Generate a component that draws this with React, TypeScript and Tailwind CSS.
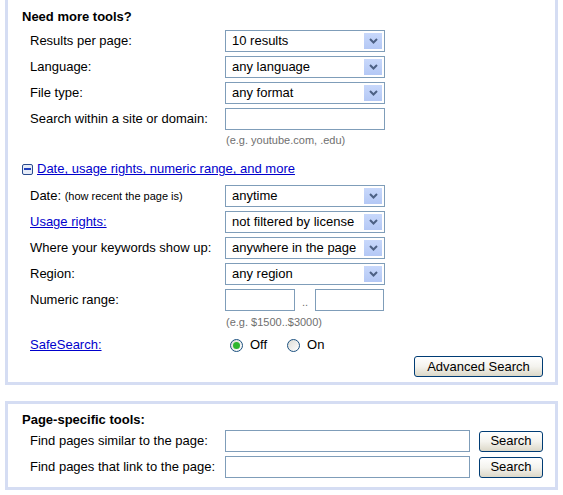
import React from "react";

const font = { fontFamily: '"Liberation Sans", Arial, sans-serif' };

function Chevron() {
  return (
    <svg width="9" height="6" viewBox="0 0 9 6">
      <path d="M1 1 L4.5 4.5 L8 1" fill="none" stroke="#4d6185" strokeWidth="2" />
    </svg>
  );
}

function Sel({ text }: { text: string }) {
  return (
    <div className="relative w-[160px] h-[22px] border border-[#7f9db9] bg-white flex items-center pl-[6px] text-[13px] text-black">
      <span className="whitespace-nowrap">{text}</span>
      <div className="absolute right-[2px] top-[2px] w-[18px] h-[16px] bg-gradient-to-b from-[#c8d8fb] to-[#b4c8f5] flex items-center justify-center">
        <Chevron />
      </div>
    </div>
  );
}

function Input({ w }: { w: string }) {
  return <div className={`h-[22px] border border-[#7f9db9] bg-white ${w}`} />;
}

function Btn({ text, w }: { text: string; w: string }) {
  return (
    <div
      className={`${w} h-[21px] border border-[#003c74] rounded-[3px] bg-gradient-to-b from-[#ffffff] via-[#f4f3ee] to-[#dcd8c8] flex items-center justify-center text-[13px] text-black`}
    >
      {text}
    </div>
  );
}

function Row({ label, children }: { label: React.ReactNode; children: React.ReactNode }) {
  return (
    <div className="grid grid-cols-[195px_1fr] h-[26px] items-center">
      <div className="text-[13px] text-black whitespace-nowrap">{label}</div>
      <div className="flex items-center">{children}</div>
    </div>
  );
}

function Radio({ checked }: { checked?: boolean }) {
  return (
    <div className="w-[13px] h-[13px] rounded-full border border-[#1c5180] bg-gradient-to-br from-[#dcdcd6] to-[#ffffff] flex items-center justify-center">
      {checked && <div className="w-[7px] h-[7px] rounded-full bg-[#2fb62f]" />}
    </div>
  );
}

export default function App() {
  return (
    <div className="w-[563px] h-[495px] bg-white overflow-hidden" style={font}>
      <div className="ml-[5px] w-[553px] border-x-[3px] border-b-[3px] border-[#d5ddf3] pb-[5px]">
        <div className="pt-[9px] pl-[14px] h-[25px] leading-[16px] text-[13px] font-bold text-black">Need more tools?</div>
        <div className="pl-[22px] mt-[3px]">
          <Row label="Results per page:">
            <Sel text="10 results" />
          </Row>
          <Row label="Language:">
            <Sel text="any language" />
          </Row>
          <Row label="File type:">
            <Sel text="any format" />
          </Row>
          <Row label="Search within a site or domain:">
            <Input w="w-[160px]" />
          </Row>
          <div className="grid grid-cols-[195px_1fr] h-[16px] items-center">
            <div />
            <div className="pl-[1px] text-[11px] text-[#6f6f6f]">(e.g. youtube.com, .edu)</div>
          </div>
        </div>
        <div className="pl-[14px] mt-[13px] h-[16px] flex items-center">
          <div className="w-[11px] h-[11px] border border-[#2a4b8d] rounded-[2px] bg-[#e6ecf8] flex items-center justify-center">
            <div className="w-[7px] h-[2px] bg-[#1f3fbf]" />
          </div>
          <a className="ml-[4px] text-[13px] text-[#0000cc] underline">Date, usage rights, numeric range, and more</a>
        </div>
        <div className="pl-[22px] mt-[6px]">
          <Row
            label={
              <span>
                Date: <span className="text-[11px]">(how recent the page is)</span>
              </span>
            }
          >
            <Sel text="anytime" />
          </Row>
          <Row label={<a className="text-[#0000cc] underline">Usage rights:</a>}>
            <Sel text="not filtered by license" />
          </Row>
          <Row label="Where your keywords show up:">
            <Sel text="anywhere in the page" />
          </Row>
          <Row label="Region:">
            <Sel text="any region" />
          </Row>
          <Row label="Numeric range:">
            <Input w="w-[70px]" />
            <span className="w-[20px] text-center text-[11px] text-[#6f6f6f] leading-none pt-[4px]">..</span>
            <Input w="w-[69px]" />
          </Row>
          <div className="grid grid-cols-[195px_1fr] h-[16px] mt-[1px] items-center">
            <div />
            <div className="pl-[1px] text-[11px] text-[#6f6f6f]">(e.g. $1500..$3000)</div>
          </div>
          <div className="grid grid-cols-[195px_1fr] h-[22px] mt-[4px] items-center">
            <a className="text-[13px] text-[#0000cc] underline">SafeSearch:</a>
            <div className="flex items-center pl-[5px] text-[13px] text-black">
              <Radio checked />
              <span className="ml-[7px]">Off</span>
              <div className="ml-[20px]">
                <Radio />
              </div>
              <span className="ml-[7px]">On</span>
            </div>
          </div>
        </div>
        <div className="flex justify-end pr-[12px]">
          <Btn text="Advanced Search" w="w-[129px]" />
        </div>
      </div>

      <div className="ml-[5px] mt-[16px] w-[553px] border-[3px] border-[#d5ddf3] pt-[8px] pb-[7px]">
        <div className="pl-[14px] h-[16px] leading-[16px] text-[13px] font-bold text-black">Page-specific tools:</div>
        <div className="pl-[22px]">
          <Row label="Find pages similar to the page:">
            <Input w="w-[245px]" />
            <div className="ml-[9px]">
              <Btn text="Search" w="w-[64px]" />
            </div>
          </Row>
          <Row label="Find pages that link to the page:">
            <Input w="w-[245px]" />
            <div className="ml-[9px]">
              <Btn text="Search" w="w-[64px]" />
            </div>
          </Row>
        </div>
      </div>
    </div>
  );
}
